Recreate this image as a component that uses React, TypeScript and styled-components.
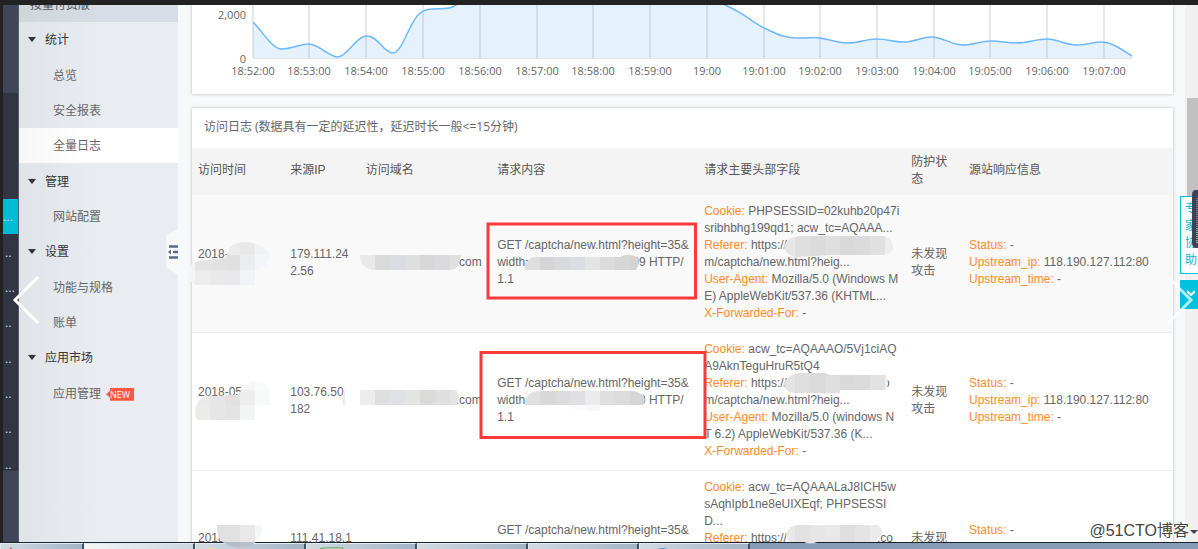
import React from 'react';
import styled, { createGlobalStyle } from 'styled-components';

const LATIN = `"Liberation Sans", "Noto Sans CJK SC", sans-serif`;
const UI = `"Open Sans", "Noto Sans CJK SC", sans-serif`;

const GlobalStyle = createGlobalStyle`
  * { box-sizing: border-box; }
  body { margin: 0; font: 12px/17px ${LATIN}; color: #666; }
  button { border: 0; padding: 0; background: none; font: inherit; cursor: pointer; }
  a { color: inherit; text-decoration: none; }
`;

const Page = styled.div`
  position: relative;
  display: flex;
  flex-direction: column;
  height: 100vh;
  overflow: hidden;
  background: #f6f8fa;
  border-top: 5px solid #222;
`;

const Body = styled.div`
  display: flex;
  flex: 1;
  min-height: 0;
  border-left: 3px solid #222;
`;

const Rail = styled.nav`
  flex: none;
  width: 16px;
  padding-top: 88px;
  background: #404558;
  border-right: 1px solid #555968;
`;

const RailList = styled.div`
  display: flex;
  flex-direction: column;
  height: 378px;
  padding-top: 106px;
  overflow: hidden;
  background: #323642;
`;

const RailItems = styled.div`
  flex: none;
  display: grid;
  grid-auto-rows: 1fr;
  height: 283px;
`;

const RailItem = styled.a<{ $active?: boolean }>`
  display: flex;
  align-items: center;
  padding: 2px 0 0 ${(p) => (p.$active ? 0 : 2)}px;
  background: ${(p) => (p.$active ? '#00bcd6' : 'transparent')};
  color: #dfe2e8;
  overflow: hidden;
`;

const Sidebar = styled.nav`
  position: relative;
  flex: none;
  width: 159px;
  background: linear-gradient(90deg, #e0e4e8, #e9edf2 50%);
`;

const Plan = styled.div`
  height: 17px;
  padding-left: 11px;
  line-height: 1px;
  overflow: hidden;
  background: linear-gradient(90deg, #d0d5da, #d8dde5 50%);
  color: #555;
`;

const Menu = styled.div`
  display: grid;
  grid-auto-rows: 1fr;
  height: 389px;
`;

const Group = styled.button`
  display: flex;
  align-items: center;
  gap: 9px;
  padding: 2px 0 0 9px;
  color: #333;
  text-align: left;
`;

const Caret = styled.span`
  margin-bottom: 2px;
  border: 4px solid transparent;
  border-top: 5px solid #333;
  border-bottom: 0;
`;

const Item = styled.a<{ $active?: boolean }>`
  display: flex;
  align-items: center;
  padding: 2px 0 0 34px;
  background: ${(p) => (p.$active ? 'linear-gradient(90deg, #f7f7f7, #fff 40%)' : 'none')};
`;

const NewBadge = styled.span`
  margin-left: 5px;
  padding: 0 4px;
  height: 13px;
  background: #ff5740;
  clip-path: polygon(4px 0, 100% 0, 100% 100%, 4px 100%, 4px 10px, 0 50%, 4px 3px);
  color: #fff;
  font: 9px/13px ${UI};
`;

const Collapse = styled.button`
  position: absolute;
  right: 0;
  top: 224px;
  width: 12px;
  height: 46px;
  svg { display: block; }
`;

const Content = styled.main`
  flex: 1;
  min-width: 0;
  display: flex;
  flex-direction: column;
  gap: 14px;
  padding: 0 12px 0 14px;
  overflow: hidden;
`;

const Card = styled.section`
  flex: none;
  background: #fff;
  box-shadow: 0 0 3px rgba(0, 0, 0, 0.25);
`;

const ChartSvg = styled.svg`
  display: block;
  width: 100%;
  font: 11px ${UI};
  fill: #666;
`;

const CardTitle = styled.h2`
  display: flex;
  align-items: center;
  gap: 3px;
  height: 40px;
  margin: 0;
  padding: 0 12px 4px;
  font: 12px ${UI};
  small { font-size: 12px; }
`;

const Table = styled.table`
  width: 100%;
  table-layout: fixed;
  border-collapse: separate;
  border-spacing: 0;
`;

const Th = styled.th<{ $w: string }>`
  width: ${(p) => p.$w};
  height: 47px;
  padding: 0 6px 2px;
  background: #f4f4f4;
  color: #555;
  font-weight: 400;
  text-align: left;
  white-space: pre-line;
`;

const Tr = styled.tr<{ $shade?: boolean }>`
  background: ${(p) => (p.$shade ? '#f9f9f9' : '#fff')};
`;

const Td = styled.td`
  height: 138px;
  padding: 8px 6px 10px;
  border-bottom: 1px solid #eee;
  white-space: pre;
`;

const Key = styled.span`
  color: #ff8a26;
`;

const Gap = styled.span<{ $w: number }>`
  display: inline-block;
  width: ${(p) => p.$w}px;
`;

const Scroll = styled.div`
  flex: none;
  width: 13px;
  padding: 93px 0 0 2px;
  background: #f0f0f0;
`;

const Thumb = styled.div`
  height: 160px;
  background: #c1c1c1;
`;

const HelpDock = styled.div`
  position: absolute;
  right: 0;
  top: 191px;
  width: 18px;
  display: flex;
  flex-direction: column;
  gap: 6px;
`;

const HelpButton = styled.button`
  height: 78px;
  padding: 4px 0 4px 4px;
  overflow: hidden;
  border: 1px solid #00c1de;
  border-right: 0;
  background: #fff;
  color: #00b7d3;
  text-align: left;
  white-space: pre;
`;

const FoldButton = styled.button`
  display: flex;
  align-items: center;
  justify-content: center;
  height: 29px;
  padding: 0 0 4px 4px;
  background: #00c1de;
`;

const Device = styled.svg`
  position: absolute;
  right: 0;
  top: 185px;
`;

const Nav = styled.button<{ $side: 'left' | 'right' }>`
  position: absolute;
  top: 270px;
  ${(p) => (p.$side === 'left' ? 'left: 12px' : 'right: 4px')};
  width: 28px;
  height: 50px;
  svg { display: block; }
`;

const Overlay = styled.svg`
  position: absolute;
  left: 0;
  top: -5px;
  pointer-events: none;
`;

const Watermark = styled.div`
  position: absolute;
  right: 9px;
  bottom: 7px;
  font: 16px/22px ${LATIN};
  color: #444;
  text-shadow: 1px 1px 0 #fff, -1px 1px 0 #fff, 0 0 2px #fff;
`;

const ScrollDown = styled.span`
  position: absolute;
  right: 0;
  bottom: 15px;
  border: 4px solid transparent;
  border-top-color: #444;
  border-bottom: 0;
`;

const Taskbar = styled.footer`
  flex: none;
  display: flex;
  height: 7px;
  border-top: 1px solid #1b232c;
  background: #869cb7;
  overflow: hidden;
`;

const Task = styled.button<{ $first?: boolean; $on?: boolean }>`
  flex: none;
  width: ${(p) => (p.$first ? 84 : 111)}px;
  height: 12px;
  padding-left: ${(p) => (p.$first ? 9 : 11)}px;
  border: 1px solid #e3e9ee;
  border-right: 2px solid #3f5365;
  background: ${(p) =>
    p.$on ? 'linear-gradient(90deg, #f4f6f7, #ccd6de)' : 'linear-gradient(90deg, #d3dbe1, #a3b4c8)'};
  text-align: left;
  svg { display: block; }
`;

const hours = [
  '18:52:00', '18:53:00', '18:54:00', '18:55:00', '18:56:00', '18:57:00', '18:58:00', '18:59:00',
  '19:00', '19:01:00', '19:02:00', '19:03:00', '19:04:00', '19:05:00', '19:06:00', '19:07:00',
];
const tickX = [61, 117, 174, 231, 288, 345, 401, 458, 515, 572, 628, 685, 742, 798, 855, 912];

const curve =
  'M61 17 C71 27 80 44 90 44 S107 39 117 39 S137 52 146 52 S164 31 175 31 S192 48 201 48 ' +
  'S217 18 227 9 C236 -1 255 8 264 0 C290 -50 500 -50 533 0 C552 8 560 17 572 23 ' +
  'C584 28 590 33 605 33 S620 32 628 33 S645 38 656 38 S674 34 685 34 S700 37 711 37 ' +
  'S730 32 740 32 S760 40 771 40 S788 36 799 36 S814 38 825 38 S844 34 855 34 ' +
  'S872 40 885 40 S900 37 909 37 C920 37 930 45 940 51';

function Chart() {
  return (
    <ChartSvg viewBox="0 0 981 89" role="img" aria-label="QPS">
      <path d={`${curve} V53 H61 Z`} fill="#e5f2fe" />
      {tickX.map((x) => (
        <path key={x} d={`M${x} 0V53`} stroke="#000" strokeOpacity="0.12" strokeWidth="1.5" />
      ))}
      <path d="M61 53.5H941" stroke="#e4e7ea" />
      <path d={curve} fill="none" stroke="#6db8fd" strokeWidth="1.5" />
      <text x="54" y="14" textAnchor="end">2,000</text>
      <text x="54" y="58" textAnchor="end">0</text>
      {hours.map((h, i) => (
        <text key={h} x={tickX[i]} y="70" textAnchor="middle">{h}</text>
      ))}
    </ChartSvg>
  );
}

type Blot = { clip: string; x: number; rows: { y: number; h?: number; cells: string[] }[] };

const blots: Blot[] = [
  {
    clip: 'M190 268Q190 262 205 260L226 258Q228 242 245 242Q262 242 270 255L266 266L255 270V285H195L190 280Z',
    x: 180,
    rows: [
      { y: 240, cells: ['#eee', '#eee', '#ebebeb', '#ebebeb', '#e8e8e9', '#f1f2f4'] },
      { y: 255, cells: ['#f3f4f6', '#e4e4e4', '#e2e2e2', '#e0e0e0', '#eaecf0', '#f4f5f9'] },
      { y: 270, cells: ['#f3f4f6', '#ececec', '#e9e9e9', '#e8e8ea', '#f1f3f7', '#f6f7fa'] },
    ],
  },
  {
    clip: 'M195 412Q196 396 210 396L238 395Q246 381 258 381Q270 382 270 395V405H255V420H198Q195 418 195 412Z',
    x: 195,
    rows: [
      { y: 375, cells: ['#f4f4f4', '#f4f4f4', '#f4f4f4', '#f6f7f7', '#f9fafa'] },
      { y: 390, cells: ['#eaeaea', '#e6e6e6', '#e1e1e1', '#ededed', '#f7f8f8'] },
      { y: 405, cells: ['#ecebe9', '#e6e6e6', '#e4e4e4', '#f2f5f4', '#fafafa'] },
    ],
  },
  {
    clip: 'M217 525H262V532Q258 547 240 547Q220 547 217 532Z',
    x: 210,
    rows: [
      { y: 525, h: 17, cells: ['#e0e0e0', '#e1e1e1', '#e8e8e8', '#f5f6f8'] },
      { y: 542, cells: ['#b4bbc3', '#b6bcc4', '#b8bfc6', '#bdc4cc'] },
    ],
  },
  {
    clip: 'M360 255H461L458 266Q455 270 450 270H372Q362 268 360 258Z',
    x: 360,
    rows: [{ y: 255, cells: ['#e9e9e9', '#dadada', '#dbdcdf', '#dfdfdf', '#d7d7d7', '#dadadc', '#e0e0e0'] }],
  },
  {
    clip: 'M360 390H456L459 396L457 405H360ZM344 391H345V405H343Q341 398 344 391Z',
    x: 330,
    rows: [{ y: 390, cells: ['#ececec', '#ececec', '#ededed', '#dedede', '#e0e1e4', '#e4e4e3', '#dadada', '#dfdfdf', '#e4e4e4'] }],
  },
  {
    clip: 'M524 270Q526 257 536 257H620Q630 252 638 258V266L636 270Z',
    x: 525,
    rows: [{ y: 250, h: 20, cells: ['#dedede', '#d5d5d5', '#d9d9db', '#dcdde0', '#e4e4e4', '#dbdbdb', '#d6d6d6', '#d3d3d3'] }],
  },
  {
    clip: 'M524 405Q526 391 538 391H634Q645 394 645 400L643 405H600V411H585V409H570V405Z',
    x: 525,
    rows: [
      { y: 390, cells: ['#e0e0e0', '#d8d8d8', '#dcdcdc', '#e0e0e2', '#ebebeb', '#dfdfdf', '#dcdcdc', '#d6d6d6'] },
      { y: 405, cells: ['#fff', '#fff', '#fff', '#fafafa', '#f7f7f7', '#fff', '#fff', '#fff'] },
    ],
  },
  {
    clip: 'M784 246Q787 237 800 236H885Q894 240 893 250Q890 255 880 255H830L795 257Q784 254 784 246Z',
    x: 780,
    rows: [{ y: 235, h: 23, cells: ['#e6e6e6', '#dedede', '#dbdbdb', '#dfdfdf', '#d9d9d9', '#dbdbdb', '#e0e0e0', '#ededed'] }],
  },
  {
    clip: 'M784 384Q787 374 800 373H825L830 375H886Q890 383 886 390H840V393H795Q784 392 784 384Z',
    x: 780,
    rows: [{ y: 373, h: 21, cells: ['#e4e4e4', '#dedede', '#dadada', '#dedede', '#d9d9d9', '#dbdbdb', '#e2e2e2', '#efefef'] }],
  },
  {
    clip: 'M786 535Q788 525 798 525H878Q883 528 882 535L874 542H817Q810 545 804 542H790Z',
    x: 780,
    rows: [{ y: 525, h: 20, cells: ['#e8e8e8', '#e2e2e2', '#e6e6e6', '#e8e8e8', '#dfdfdf', '#e4e4e4', '#ebebeb'] }],
  },
];

function Annotations() {
  return (
    <Overlay width="1198" height="549" aria-hidden="true">
      {blots.map((b, i) => (
        <g key={i} clipPath={`url(#blot${i})`}>
          <clipPath id={`blot${i}`}><path d={b.clip} /></clipPath>
          {b.rows.map((r) =>
            r.cells.map((c, j) => (
              <rect key={`${r.y}-${j}`} x={b.x + j * 15} y={r.y} width="15" height={r.h ?? 15} fill={c} shapeRendering="crispEdges" />
            )),
          )}
        </g>
      ))}
      <g fill="none" stroke="#fa3a3a" strokeWidth="3">
        <rect x="488" y="224" width="207.5" height="74" />
        <rect x="481" y="352.5" width="224" height="85" />
      </g>
    </Overlay>
  );
}

type Log = { date: string; ip: string; domain: string; request: React.ReactNode; fields: [string, React.ReactNode][] };

const logs: Log[] = [
  {
    date: '2018-\n ',
    ip: '179.111.24\n2.56',
    domain: '.com',
    request: <>{'GET /captcha/new.html?height=35&\nwidth='}<Gap $w={100} />{'99 HTTP/\n1.1'}</>,
    fields: [
      ['Cookie:', 'PHPSESSID=02kuhb20p47i\nsribhbhg199qd1; acw_tc=AQAAA...'],
      ['Referer:', 'https://\nm/captcha/new.html?heig...'],
      ['User-Agent:', 'Mozilla/5.0 (Windows M\nE) AppleWebKit/537.36 (KHTML...'],
      ['X-Forwarded-For:', '-'],
    ],
  },
  {
    date: '2018-05\n ',
    ip: '103.76.50\n182',
    domain: '.com',
    request: <>{'GET /captcha/new.html?height=35&\nwidth='}<Gap $w={100} />{'99 HTTP/\n1.1'}</>,
    fields: [
      ['Cookie:', 'acw_tc=AQAAAO/5Vj1ciAQ\nA9AknTeguHruR5tQ4'],
      ['Referer:', <>https://<Gap $w={96} />{'o\nm/captcha/new.html?heig...'}</>],
      ['User-Agent:', 'Mozilla/5.0 (windows N\nT 6.2) AppleWebKit/537.36 (K...'],
      ['X-Forwarded-For:', '-'],
    ],
  },
  {
    date: '2018-\n ',
    ip: '111.41.18.1\n ',
    domain: '.com',
    request: 'GET /captcha/new.html?height=35&\nwidth=1500&style=480&time=9.79\nHTTP/1.1',
    fields: [
      ['Cookie:', 'acw_tc=AQAAALaJ8ICH5w\nsAqhIpb1ne8eUIXEqf; PHPSESSI\nD...'],
      ['Referer:', <>https://<Gap $w={90} />{'.co\nm/captcha/new.html?heig...'}</>],
      ['User-Agent:', 'Mozilla/5.0 (Windows N\nT 6.1) AppleWebKit/537.36 (K...'],
      ['X-Forwarded-For:', '-'],
    ],
  },
];

const upstream: [string, string][] = [
  ['Status:', '-'],
  ['Upstream_ip:', '118.190.127.112:80'],
  ['Upstream_time:', '-'],
];

const Fields = ({ list }: { list: [string, React.ReactNode][] }) => (
  <>
    {list.map(([k, v]) => (
      <div key={k}><Key>{k}</Key> {v}</div>
    ))}
  </>
);

const columns: [string, string][] = [
  ['访问时间', '9.4%'], ['来源IP', '7.7%'], ['访问域名', '13.4%'], ['请求内容', '21.1%'],
  ['请求主要头部字段', '21.1%'], ['防护状\n态', '5.9%'], ['源站响应信息', '21.4%'],
];

const menu: { label: string; group?: boolean; active?: boolean; isNew?: boolean }[] = [
  { label: '统计', group: true }, { label: '总览' }, { label: '安全报表' }, { label: '全量日志', active: true },
  { label: '管理', group: true }, { label: '网站配置' }, { label: '设置', group: true }, { label: '功能与规格' },
  { label: '账单' }, { label: '应用市场', group: true }, { label: '应用管理', isNew: true },
];

const rail = ['...', '..', '...', '..', '..', '..', '..', '..'];

export default function App() {
  return (
    <Page>
      <GlobalStyle />
      <Body>
        <Rail>
          <RailList>
            <RailItems>
              {rail.map((t, i) => <RailItem key={i} href="#" $active={i === 0}>{t}</RailItem>)}
            </RailItems>
          </RailList>
        </Rail>
        <Sidebar>
          <Plan>按量付费版</Plan>
          <Menu>
            {menu.map((m) =>
              m.group ? (
                <Group key={m.label}><Caret />{m.label}</Group>
              ) : (
                <Item key={m.label} href="#" $active={m.active}>
                  {m.label}
                  {m.isNew && <NewBadge>NEW</NewBadge>}
                </Item>
              ),
            )}
          </Menu>
          <Collapse aria-label="收起">
            <svg width="12" height="46">
              <path d="M12 0L0 7V38L12 46Z" fill="#f6f8fa" />
              <path d="M3 17.5H12M7 23H12M3 28.5H12" stroke="#5d6b82" strokeWidth="2.5" />
              <path d="M2 23L5 20.500V25.500Z" fill="#5d6b82" />
            </svg>
          </Collapse>
        </Sidebar>
        <Content>
          <Card><Chart /></Card>
          <Card>
            <CardTitle>访问日志 <small>(数据具有一定的延迟性，延迟时长一般&lt;=15分钟)</small></CardTitle>
            <Table>
              <thead>
                <tr>{columns.map(([c, w]) => <Th key={c} $w={w}>{c}</Th>)}</tr>
              </thead>
              <tbody>
                {logs.map((l, i) => (
                  <Tr key={l.ip} $shade={i === 0}>
                    <Td>{l.date}</Td>
                    <Td>{l.ip}</Td>
                    <Td><Gap $w={90} />{l.domain}</Td>
                    <Td>{l.request}</Td>
                    <Td><Fields list={l.fields} /></Td>
                    <Td>{'未发现\n攻击'}</Td>
                    <Td><Fields list={upstream} /></Td>
                  </Tr>
                ))}
              </tbody>
            </Table>
          </Card>
        </Content>
        <Scroll><Thumb /></Scroll>
      </Body>
      <Taskbar>
        <Task $first aria-label="任务 1"><svg width="10" height="6"><path d="M0 2L3 6" stroke="#b33" strokeWidth="2" /></svg></Task>
        <Task $on aria-label="任务 2"><svg width="26" height="6"><circle cx="12" cy="12" r="9" fill="#d9483b" /></svg></Task>
        <Task aria-label="任务 3"><svg width="26" height="6"><path d="M0 2H8L10 4H17V6H0Z" fill="#f2e08c" /></svg></Task>
        <Task aria-label="任务 4"><svg width="28" height="6"><path d="M0 6Q1 2 5 2H25V6" fill="#fff" stroke="#4c9a4a" strokeWidth="1" /></svg></Task>
        <Task aria-label="任务 5" />
        <Task aria-label="任务 6" />
        <Task aria-label="任务 7"><svg width="26" height="6"><circle cx="12" cy="13" r="11" fill="#2b9cf2" /></svg></Task>
      </Taskbar>
      <HelpDock>
        <HelpButton>{'专\n家\n协\n助'}</HelpButton>
        <FoldButton aria-label="折叠">
          <svg width="8" height="6"><path d="M0 1L4 5L8 1" fill="none" stroke="#fff" strokeWidth="2" /></svg>
        </FoldButton>
      </HelpDock>
      <Device width="6" height="58" aria-hidden="true">
        <path d="M6 0H4Q0 0 0 5V53Q0 58 4 58H6Z" fill="#3d4256" />
        <path d="M5 8V38" stroke="#777d8e" strokeWidth="2" strokeDasharray="1 1" />
        <path d="M5 38V54" stroke="#5fc98a" strokeWidth="2" strokeDasharray="1 1" />
      </Device>
      <Annotations />
      <Nav $side="left" aria-label="上一张">
        <svg width="28" height="50"><path d="M26 2L3 25L26 48" fill="none" stroke="#fff" strokeWidth="3" /></svg>
      </Nav>
      <Nav $side="right" aria-label="下一张">
        <svg width="28" height="50"><path d="M2 2L25 25L2 48" fill="none" stroke="#fff" strokeOpacity="0.7" strokeWidth="3" /></svg>
      </Nav>
      <ScrollDown />
      <Watermark>@51CTO博客</Watermark>
    </Page>
  );
}
